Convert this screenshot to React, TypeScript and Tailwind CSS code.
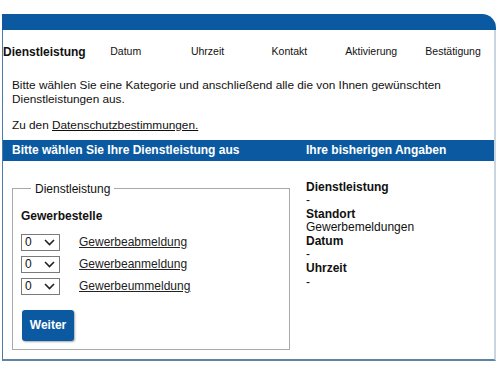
import React from "react";

const BLUE = "bg-[#0b5aa1]";

function Sel() {
  return (
    <div className="w-[39px] h-[17px] border border-[#7a7a7a] bg-white flex items-center justify-between pl-[3px] pr-[4px] text-[12px] leading-none text-[#111]">
      <span>0</span>
      <svg width="11" height="7" viewBox="0 0 11 7">
        <polyline points="1,1 5.5,5.5 10,1" fill="none" stroke="#222" strokeWidth="1.6" />
      </svg>
    </div>
  );
}

function Row({ label }: { label: string }) {
  return (
    <div className="flex items-center h-[17px]">
      <Sel />
      <a className="ml-[19px] underline text-[12px] leading-[14px] text-[#222]">{label}</a>
    </div>
  );
}

export default function App() {
  const nav = ["Datum", "Uhrzeit", "Kontakt", "Aktivierung", "Bestätigung"];
  return (
    <div
      className="w-[500px] h-[375px] bg-white pt-[14px] pl-[2px] text-[#111]"
      style={{ fontFamily: '"Liberation Sans", Arial, sans-serif' }}
    >
      <div className="w-[494px]">
        <div className={`h-[16px] ${BLUE} rounded-tr-[14px]`} />
        <div className="border-l border-l-[#4a7aa8] border-r-2 border-r-[#c9d6e2] border-b-2 border-b-[#5f84a6] pb-[9px]">
          <div className="grid grid-cols-6 h-[44px] items-center text-center">
            <div className="text-[12px] font-bold">Dienstleistung</div>
            {nav.map((n) => (
              <div key={n} className="text-[10.5px]">
                {n}
              </div>
            ))}
          </div>
          <div className="pl-[9px] pt-[5px] text-[11.8px] leading-[13.5px]">
            <p>
              Bitte wählen Sie eine Kategorie und anschließend alle die von Ihnen gewünschten
              <br />
              Dienstleistungen aus.
            </p>
            <p className="mt-[13px]">
              Zu den <a className="underline">Datenschutzbestimmungen.</a>
            </p>
          </div>
          <div className={`mt-[7px] h-[21px] ${BLUE} flex items-center text-white font-bold text-[12px]`}>
            <div className="pl-[9px] w-[303px]">Bitte wählen Sie Ihre Dienstleistung aus</div>
            <div>Ihre bisherigen Angaben</div>
          </div>
          <div className="flex pl-[9px]">
            <fieldset className="mt-[21px] w-[278px] border border-[#a9a9a9] px-[8px] pb-[8px]">
              <legend className="ml-[10px] px-[4px] text-[12px] leading-[14px]">Dienstleistung</legend>
              <div className="mt-[13px] text-[12px] font-bold leading-[14px]">Gewerbestelle</div>
              <div className="mt-[11px] flex flex-col gap-[5px]">
                <Row label="Gewerbeabmeldung" />
                <Row label="Gewerbeanmeldung" />
                <Row label="Gewerbeummeldung" />
              </div>
              <button className={`mt-[15px] ml-[1px] w-[52px] h-[31px] ${BLUE} rounded-[3px] text-white font-bold text-[12px] shadow-[1px_1px_2px_rgba(0,0,0,0.35)]`}>
                Weiter
              </button>
            </fieldset>
            <div className="ml-[16px] pt-[20px] text-[12px] leading-[13.6px]">
              <div className="font-bold">Dienstleistung</div>
              <div>-</div>
              <div className="font-bold">Standort</div>
              <div>Gewerbemeldungen</div>
              <div className="font-bold">Datum</div>
              <div>-</div>
              <div className="font-bold">Uhrzeit</div>
              <div>-</div>
            </div>
          </div>
        </div>
      </div>
    </div>
  );
}
